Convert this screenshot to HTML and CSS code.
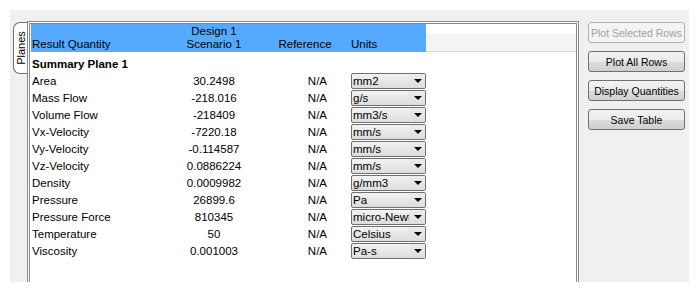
FILE: index.html
```html
<!DOCTYPE html>
<html lang="en">
<head>
  <meta charset="UTF-8" />
  <title>Summary Table</title>
  <link rel="stylesheet" href="styles.css">
</head>
<body>
  <div id="painel">
    <div id="abas">
      <div class="aba"><span>Planes</span></div>
    </div>

    <div id="quadro">
      <div class="cabecalho">
        <div class="cab-azul">
          <div class="cel nome">Result Quantity</div>
          <div class="cel valor">Design 1<br>Scenario 1</div>
          <div class="cel ref">Reference</div>
          <div class="cel unid">Units</div>
        </div>
        <div class="cab-resto"></div>
      </div>

      <div class="linhas">
        <div class="linha titulo"><div class="cel nome">Summary Plane 1</div></div>

        <div class="linha">
          <div class="cel nome">Area</div><div class="cel valor">30.2498</div><div class="cel ref">N/A</div>
          <div class="cel unid"><div class="combo"><span>mm2</span><i></i></div></div>
        </div>
        <div class="linha">
          <div class="cel nome">Mass Flow</div><div class="cel valor">-218.016</div><div class="cel ref">N/A</div>
          <div class="cel unid"><div class="combo"><span>g/s</span><i></i></div></div>
        </div>
        <div class="linha">
          <div class="cel nome">Volume Flow</div><div class="cel valor">-218409</div><div class="cel ref">N/A</div>
          <div class="cel unid"><div class="combo"><span>mm3/s</span><i></i></div></div>
        </div>
        <div class="linha">
          <div class="cel nome">Vx-Velocity</div><div class="cel valor">-7220.18</div><div class="cel ref">N/A</div>
          <div class="cel unid"><div class="combo"><span>mm/s</span><i></i></div></div>
        </div>
        <div class="linha">
          <div class="cel nome">Vy-Velocity</div><div class="cel valor">-0.114587</div><div class="cel ref">N/A</div>
          <div class="cel unid"><div class="combo"><span>mm/s</span><i></i></div></div>
        </div>
        <div class="linha">
          <div class="cel nome">Vz-Velocity</div><div class="cel valor">0.0886224</div><div class="cel ref">N/A</div>
          <div class="cel unid"><div class="combo"><span>mm/s</span><i></i></div></div>
        </div>
        <div class="linha">
          <div class="cel nome">Density</div><div class="cel valor">0.0009982</div><div class="cel ref">N/A</div>
          <div class="cel unid"><div class="combo"><span>g/mm3</span><i></i></div></div>
        </div>
        <div class="linha">
          <div class="cel nome">Pressure</div><div class="cel valor">26899.6</div><div class="cel ref">N/A</div>
          <div class="cel unid"><div class="combo"><span>Pa</span><i></i></div></div>
        </div>
        <div class="linha">
          <div class="cel nome">Pressure Force</div><div class="cel valor">810345</div><div class="cel ref">N/A</div>
          <div class="cel unid"><div class="combo"><span>micro-Newton</span><i></i></div></div>
        </div>
        <div class="linha">
          <div class="cel nome">Temperature</div><div class="cel valor">50</div><div class="cel ref">N/A</div>
          <div class="cel unid"><div class="combo"><span>Celsius</span><i></i></div></div>
        </div>
        <div class="linha">
          <div class="cel nome">Viscosity</div><div class="cel valor">0.001003</div><div class="cel ref">N/A</div>
          <div class="cel unid"><div class="combo"><span>Pa-s</span><i></i></div></div>
        </div>
      </div>
    </div>

    <div id="botoes">
      <button class="botao" disabled>Plot Selected Rows</button>
      <button class="botao">Plot All Rows</button>
      <button class="botao">Display Quantities</button>
      <button class="botao">Save Table</button>
    </div>
  </div>
</body>
</html>
```

FILE: styles.css
```css
* {
  box-sizing: border-box;
}
html, body {
  margin: 0;
  padding: 0;
  background: #fff;
  font-family: "Liberation Sans", Arial, sans-serif;
  font-size: 11.5px;
  color: #000;
}

#painel {
  margin: 10px;
  width: 679px;
  height: 272px;
  background: #f0f0f0;
  display: flex;
  align-items: flex-start;
  padding-top: 11px;
}

#abas {
  width: 17px;
  padding-top: 1px;
  display: flex;
  justify-content: flex-end;
}

.aba {
  width: 15px;
  height: 52px;
  background: #fff;
  border: 1px solid #6f6f6f;
  border-right: none;
  border-radius: 7px 0 0 7px;
  display: flex;
  align-items: center;
  justify-content: center;
  margin-right: -1px;
}
.aba span {
  transform: rotate(-90deg);
  white-space: nowrap;
  font-size: 11px;
}

#quadro {
  width: 552px;
  height: 261px;
  background: #fff;
  border: 3px double #8a8a8a;
  border-bottom: none;
  padding: 0 0 0 1px;
}

.cabecalho {
  display: flex;
  height: 28px;
}
.cab-azul {
  display: grid;
  grid-template-columns: 137px 92px 90px 76px;
  background: #55aaff;
  align-items: end;
  padding-bottom: 1px;
}
.cab-azul .cel {
  line-height: 13px;
}
.cab-azul .valor {
  text-align: center;
}
.cab-azul .ref {
  text-align: center;
}
.cab-azul .unid {
  padding-left: 1px;
}
.cab-resto {
  flex: 1;
  background: linear-gradient(#fff 0, #fff 9px, #f4f4f4 10px, #f4f4f4 27px, #d8d8d8 27px);
}

.linhas {
  padding-top: 3px;
}
.linha {
  display: grid;
  grid-template-columns: 137px 92px 90px 76px;
  height: 17px;
  align-items: center;
}
.cel.nome {
  padding-left: 1px;
  white-space: nowrap;
}
.titulo .nome {
  font-weight: bold;
}
.linha .valor {
  text-align: center;
}
.linha .ref {
  text-align: right;
  padding-right: 23px;
}

.combo {
  width: 75px;
  height: 16px;
  margin-left: 1px;
  border: 1px solid #707070;
  border-radius: 2px;
  background: linear-gradient(#f3f3f3, #dcdcdc);
  display: flex;
  align-items: center;
  overflow: hidden;
  position: relative;
}
.combo span {
  padding-left: 1px;
  white-space: nowrap;
  line-height: 14px;
}
.combo i {
  position: absolute;
  right: 0;
  top: 0;
  width: 16px;
  height: 14px;
  background: linear-gradient(#ececec, #dedede);
}
.combo i::after {
  content: "";
  position: absolute;
  left: 5px;
  top: 5px;
  border-left: 4px solid transparent;
  border-right: 4px solid transparent;
  border-top: 4px solid #000;
}

#botoes {
  margin-left: 9px;
  padding-top: 1px;
  display: flex;
  flex-direction: column;
  gap: 8px;
}
.botao {
  width: 97px;
  height: 21px;
  padding: 0;
  font-family: "Liberation Sans", Arial, sans-serif;
  font-size: 10.5px;
  color: #000;
  border: 1px solid #707070;
  border-radius: 3px;
  background: linear-gradient(#f2f2f2 0, #ebebeb 50%, #dddddd 51%, #cfcfcf 100%);
  white-space: nowrap;
}
.botao:disabled {
  color: #a0a0a0;
  border-color: #adb2b5;
  background: #f4f4f4;
}
```
